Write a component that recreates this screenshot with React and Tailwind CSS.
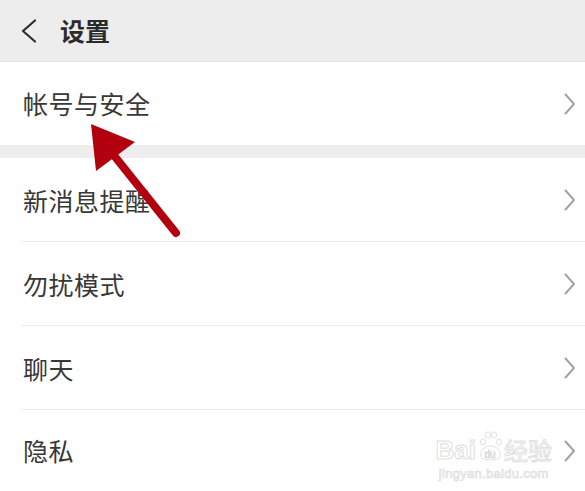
import React from "react";

const Chevron = () => (
  <svg width="12" height="22" viewBox="0 0 12 22" className="shrink-0">
    <path d="M1.5 1.5 L10 11 L1.5 20.5" fill="none" stroke="#a3a3a3" strokeWidth="2" strokeLinecap="round" strokeLinejoin="round" />
  </svg>
);

const Row = ({ label, divider = true, h = "h-[84px]", children }) => (
  <div className={`relative flex ${h} items-center bg-white pl-[23px] pr-[9px]`}>
    <span className="flex-1 text-[25px] leading-none tracking-[0.5px] text-[#383838]">{label}</span>
    {children}
    <Chevron />
    {divider && <div className="absolute bottom-0 left-[22px] right-0 h-px bg-[#ededed]" />}
  </div>
);

export default function App() {
  return (
    <div
      className="relative h-[491px] w-[585px] overflow-hidden bg-white"
      style={{ fontFamily: '"Noto Sans CJK SC", "Noto Sans", sans-serif' }}
    >
      <div className="flex h-[62px] items-center border-b border-[#e3e3e3] bg-[#ededed] pl-[20px]">
        <svg width="18" height="24" viewBox="0 0 18 24" className="shrink-0">
          <path d="M15 1.5 L3 12 L15 22.5" fill="none" stroke="#2e2e2e" strokeWidth="2.2" strokeLinecap="round" strokeLinejoin="round" />
        </svg>
        <span className="ml-[22px] text-[25px] font-bold leading-none text-[#2b2b2b]">设置</span>
      </div>
      <Row label="帐号与安全" divider={false} h="h-[83px]" />
      <div className="h-[13px] bg-[#ededed]" />
      <Row label="新消息提醒" />
      <Row label="勿扰模式" />
      <Row label="聊天" />
      <Row label="隐私" divider={false} h="h-[81px]">
        <div className="mr-[12px] mt-[8px] flex flex-col items-center gap-[4px]">
          <div className="flex h-[34px] items-end">
            <span className="text-[26px] font-bold leading-[26px] text-transparent [-webkit-text-stroke:1px_#e0e0e0]" style={{ fontFamily: '"Liberation Sans", sans-serif' }}>Bai</span>
            <svg width="26" height="34" viewBox="0 0 26 34" className="mx-[1px]">
              <g fill="none" stroke="#e0e0e0" strokeWidth="1">
                <ellipse cx="6" cy="13" rx="2.5" ry="3" />
                <ellipse cx="11" cy="6" rx="2.5" ry="3.2" />
                <ellipse cx="17" cy="6" rx="2.5" ry="3.2" />
                <ellipse cx="22" cy="13" rx="2.5" ry="3" />
                <path d="M4 28 C2 21 9 17 13 17 C18 17 25 21 23 28 C22 32 5 32 4 28 Z" />
              </g>
              <text x="7.5" y="29" fontSize="10" fill="none" stroke="#dadada" strokeWidth="0.8" fontFamily="Liberation Sans, sans-serif">du</text>
            </svg>
            <span className="text-[24px] leading-[26px] text-transparent [-webkit-text-stroke:1px_#e0e0e0]">经验</span>
          </div>
          <span className="text-[13px] leading-[13px] tracking-[0.3px] text-transparent [-webkit-text-stroke:0.7px_#dcdcdc]" style={{ fontFamily: '"Liberation Sans", sans-serif' }}>jingyan.baidu.com</span>
        </div>
      </Row>
      <svg className="pointer-events-none absolute left-0 top-0" width="585" height="491" viewBox="0 0 585 491">
        <line x1="176" y1="233" x2="108" y2="148" stroke="#b3000e" strokeWidth="8" strokeLinecap="round" />
        <polygon points="91,124 135,142 96,171" fill="#b3000e" />
      </svg>
    </div>
  );
}
